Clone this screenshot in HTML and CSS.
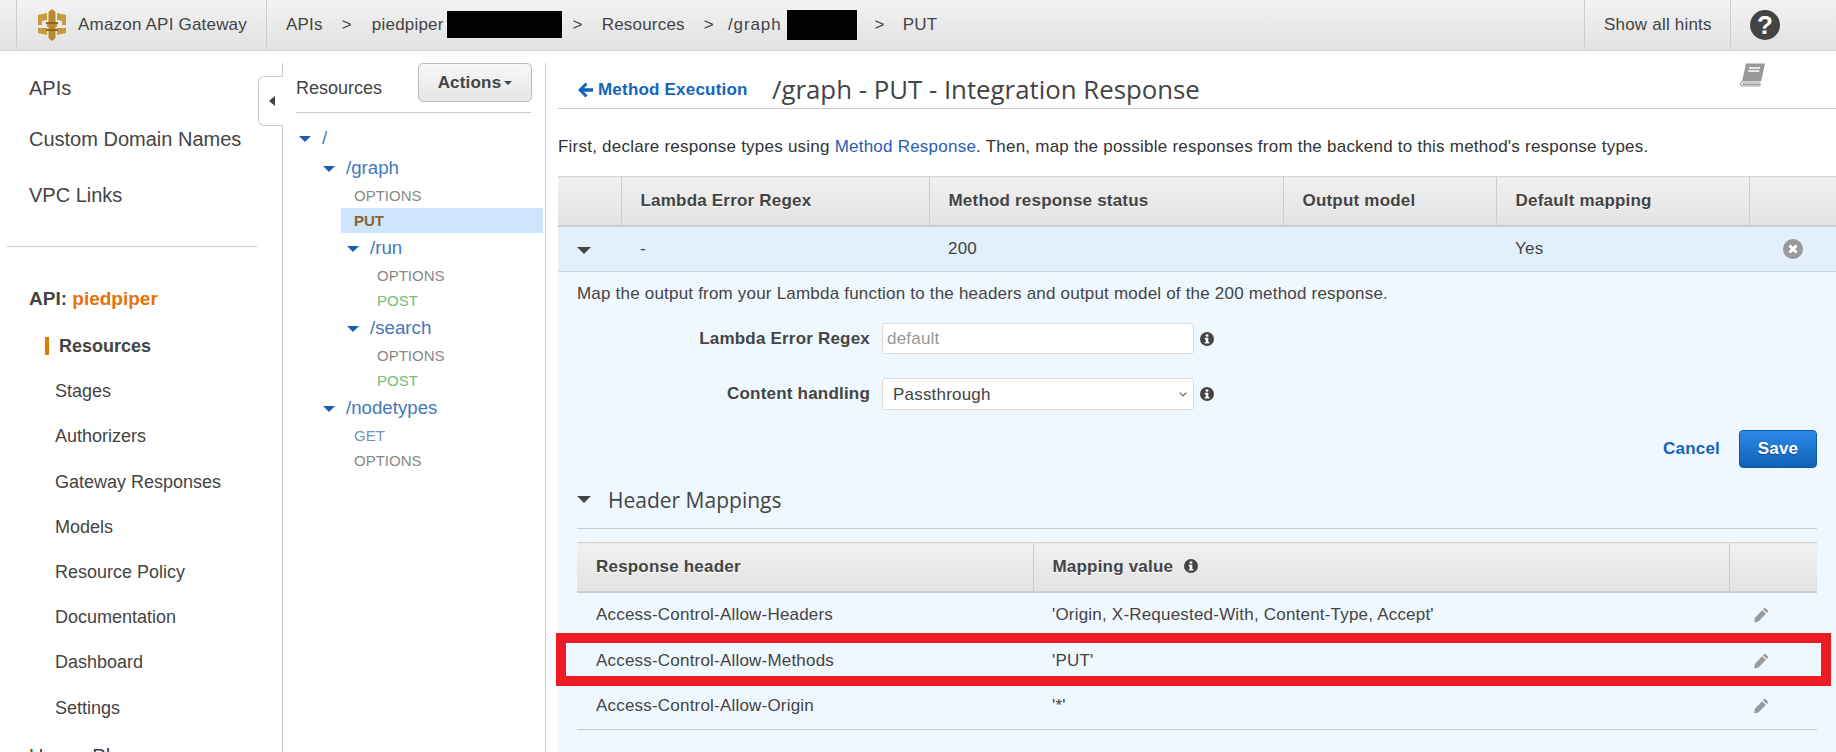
FILE: index.html
```html
<!DOCTYPE html>
<html lang="en">

<head>
    <meta charset="UTF-8">
    <title>Amazon API Gateway</title>
    <link rel="stylesheet" href="styles.css">
</head>

<body>
    <svg class="defs" width="0" height="0">
        <symbol id="i-info" viewBox="0 0 14 14">
            <circle cx="7" cy="7" r="7" fill="#444"/>
            <rect x="5.7" y="2.4" width="2.6" height="2.2" fill="#fff"/>
            <path d="M4.8 5.7h3.5v4.2h1v1.7H4.8V9.900h1V7.400h-1z" fill="#fff"/>
        </symbol>
        <symbol id="i-pencil" viewBox="0 0 16 16">
            <path d="M11.500 0.500l4 3.600-1.600 1.800-4-3.600zM9 3.200l4 3.600-7.600 7.800-4 1 .4-4.600z" fill="#9a9a9a"/>
        </symbol>
    </svg>

    <header class="topbar">
        <div class="brand">
            <svg class="logo" width="28" height="32" viewBox="0 0 28 32">
                <path d="M0 6l9-2v7l-5 1v4H0zM28 6l-9-2v7l5 1v4h4zM0 19h9v7l-9-2zM28 19h-9v7l9-2zM9 14h10v4H9z" fill="#c89b3c"/>
                <path d="M10.500 3l3.500-3 3.500 3v26l-3.500 3-3.500-3z" fill="#b98a2b"/>
                <path d="M8 13h12v2H8zM8 20h12v2H8z" fill="#8f6a1e"/>
            </svg>
            <span>Amazon API Gateway</span>
        </div>
        <nav class="crumbs">
            <span class="crumb-a">APIs</span>
            <span class="sep-a">&gt;</span>
            <span class="crumb-b">piedpiper</span>
            <span class="redact redact-a"></span>
            <span class="sep-b">&gt;</span>
            <span class="crumb-c">Resources</span>
            <span class="sep-c">&gt;</span>
            <span class="crumb-d">/graph</span>
            <span class="redact redact-b"></span>
            <span class="sep-d">&gt;</span>
            <span class="crumb-e">PUT</span>
        </nav>
        <div class="hints">Show all hints</div>
        <div class="help"><span class="help-icon">?</span></div>
    </header>

    <div class="page">
        <aside class="sidenav">
            <a class="top-link first">APIs</a>
            <a class="top-link second">Custom Domain Names</a>
            <a class="top-link third">VPC Links</a>
            <hr class="side-rule">
            <div class="api-name">API: <b>piedpiper</b></div>
            <ul class="side-list">
                <li class="active">Resources</li>
                <li>Stages</li>
                <li>Authorizers</li>
                <li>Gateway Responses</li>
                <li>Models</li>
                <li>Resource Policy</li>
                <li>Documentation</li>
                <li>Dashboard</li>
                <li>Settings</li>
            </ul>
            <div class="usage">Usage Plans</div>
            <div class="collapse-tab"><i></i></div>
        </aside>

        <section class="res-panel">
            <div class="res-head">
                <span>Resources</span>
                <button class="actions">Actions<i></i></button>
            </div>
            <ul class="tree">
                <li class="folder lv0"><i></i>/</li>
                <li class="folder lv1"><i></i>/graph</li>
                <li class="method m1 opt">OPTIONS</li>
                <li class="method m1 put">PUT</li>
                <li class="folder lv2"><i></i>/run</li>
                <li class="method m2 opt">OPTIONS</li>
                <li class="method m2 post">POST</li>
                <li class="folder lv2"><i></i>/search</li>
                <li class="method m2 opt">OPTIONS</li>
                <li class="method m2 post">POST</li>
                <li class="folder lv1"><i></i>/nodetypes</li>
                <li class="method m1 get">GET</li>
                <li class="method m1 opt">OPTIONS</li>
            </ul>
        </section>

        <main class="content">
            <div class="title-row">
                <a class="back">
                    <svg width="15" height="16" viewBox="0 0 15 16"><path d="M7.500 0.500l2 2-3.500 3.700h9v3.600H6l3.500 3.700-2 2L0 8z" fill="#1166bb"/></svg>
                    Method Execution
                </a>
                <h1>/graph - PUT - Integration Response</h1>
                <svg class="book" width="26" height="24" viewBox="0 0 26 24">
                    <path d="M6 0.500h19l-4 18H2z" fill="#999"/>
                    <path d="M2.500 18.500c-2.500 1-2.500 4 0 4.500h17l.8-1.500h-16c-1.500 0-1.500-1.500 0-1.500h16" fill="none" stroke="#999" stroke-width="1.200"/>
                    <path d="M9 5h11M8.300 8h11" stroke="#fff" stroke-width="1.500"/>
                </svg>
            </div>

            <p class="intro">First, declare response types using <a>Method Response</a>. Then, map the possible responses from the backend to this method's response types.</p>

            <table class="grid outer">
                <colgroup>
                    <col class="c0"><col class="c1"><col class="c2"><col class="c3"><col class="c4"><col class="c5">
                </colgroup>
                <thead>
                    <tr>
                        <th></th>
                        <th>Lambda Error Regex</th>
                        <th>Method response status</th>
                        <th>Output model</th>
                        <th>Default mapping</th>
                        <th></th>
                    </tr>
                </thead>
                <tbody>
                    <tr class="open-row">
                        <td><i class="caret"></i></td>
                        <td>-</td>
                        <td>200</td>
                        <td></td>
                        <td>Yes</td>
                        <td class="x-cell">
                            <svg width="20" height="20" viewBox="0 0 20 20">
                                <circle cx="10" cy="10" r="10" fill="#999"/>
                                <path d="M6.500 6.500l7 7M13.500 6.500l-7 7" stroke="#fff" stroke-width="3"/>
                            </svg>
                        </td>
                    </tr>
                </tbody>
            </table>

            <div class="detail">
                <p class="detail-text">Map the output from your Lambda function to the headers and output model of the 200 method response.</p>

                <div class="field field-a">
                    <label>Lambda Error Regex</label>
                    <input type="text" placeholder="default">
                    <svg class="info" width="14" height="14"><use href="#i-info"/></svg>
                </div>
                <div class="field field-b">
                    <label>Content handling</label>
                    <select><option>Passthrough</option></select>
                    <svg class="info" width="14" height="14"><use href="#i-info"/></svg>
                </div>

                <div class="form-actions">
                    <a class="cancel">Cancel</a>
                    <button class="save">Save</button>
                </div>

                <h2 class="section"><i class="caret"></i>Header Mappings</h2>

                <div class="map-wrap">
                    <table class="grid inner">
                        <colgroup>
                            <col class="d0"><col class="d1"><col class="d2">
                        </colgroup>
                        <thead>
                            <tr>
                                <th>Response header</th>
                                <th>Mapping value <svg class="info th-info" width="14" height="14"><use href="#i-info"/></svg></th>
                                <th></th>
                            </tr>
                        </thead>
                        <tbody>
                            <tr>
                                <td>Access-Control-Allow-Headers</td>
                                <td>'Origin, X-Requested-With, Content-Type, Accept'</td>
                                <td><svg width="16" height="16"><use href="#i-pencil"/></svg></td>
                            </tr>
                            <tr>
                                <td>Access-Control-Allow-Methods</td>
                                <td>'PUT'</td>
                                <td><svg width="16" height="16"><use href="#i-pencil"/></svg></td>
                            </tr>
                            <tr>
                                <td>Access-Control-Allow-Origin</td>
                                <td>'*'</td>
                                <td><svg width="16" height="16"><use href="#i-pencil"/></svg></td>
                            </tr>
                        </tbody>
                    </table>
                    <div class="highlight"></div>
                </div>
            </div>
        </main>
    </div>
</body>

</html>
```

FILE: styles.css
```css
*{
    margin:0;
    padding:0;
    box-sizing:border-box;
}
html,body{
    height:752px;
    overflow:hidden;
}
body{
    font-family:"Liberation Sans",Arial,sans-serif;
    font-size:17px;
    letter-spacing:.2px;
    color:#444;
    background:#fff;
}
ul{
    list-style:none;
}
i{
    font-style:normal;
}
.defs{
    position:absolute;
}

/* top bar */
.topbar{
    display:flex;
    height:51px;
    border-bottom:1px solid #d5d5d5;
    background:linear-gradient(#f3f3f3,#e1e1e1);
}
.brand{
    display:flex;
    align-items:center;
    width:251px;
    height:49px;
    margin-left:16px;
    padding-left:21px;
    border-left:1px solid #ccc;
    border-right:1px solid #ccc;
}
.logo{
    margin-right:12px;
}
.crumbs{
    display:flex;
    align-items:center;
    flex:1;
    height:49px;
    padding-left:19px;
}
.sep-a{ margin-left:19px; }
.crumb-b{ margin-left:20px; }
.redact{
    background:#000;
    height:27px;
}
.redact-a{
    width:115px;
    margin-left:3px;
}
.sep-b{ margin-left:11px; }
.crumb-c{ margin-left:19px; }
.sep-c{ margin-left:19px; }
.crumb-d{
    margin-left:14px;
    letter-spacing:.9px;
}
.redact-b{
    width:70px;
    height:30px;
    margin-left:5px;
}
.sep-d{ margin-left:18px; }
.crumb-e{ margin-left:18px; }
.hints{
    display:flex;
    align-items:center;
    width:147px;
    height:49px;
    padding-left:19px;
    border-left:1px solid #ccc;
    border-right:1px solid #ccc;
}
.help{
    display:flex;
    align-items:center;
    width:105px;
    padding-left:19px;
}
.help-icon{
    width:30px;
    height:30px;
    border-radius:50%;
    background:#444;
    color:#fff;
    font-weight:bold;
    font-size:26px;
    letter-spacing:0;
    line-height:30px;
    text-align:center;
}

/* layout */
.page{
    display:flex;
    height:701px;
}
.sidenav{
    position:relative;
    width:283px;
    flex:none;
    border-right:1px solid #ccc;
    margin-top:12px;
    padding-left:29px;
    font-size:20px;
    letter-spacing:0;
}
.top-link{
    display:block;
    line-height:24px;
}
.top-link.first{ margin-top:13px; }
.top-link.second{ margin-top:27px; }
.top-link.third{ margin-top:32px; }
.side-rule{
    border:0;
    border-top:1px solid #ccc;
    width:250px;
    margin:39px 0 0 -22px;
}
.api-name{
    margin-top:40px;
    line-height:24px;
    font-size:19px;
    font-weight:bold;
}
.api-name b{
    color:#e8710a;
}
.side-list{
    margin-top:13px;
    margin-left:26px;
    font-size:18px;
}
.side-list li{
    height:45.200px;
    line-height:45.200px;
}
.side-list li.active{
    position:relative;
    margin-left:4px;
    font-weight:bold;
}
.side-list li.active::before{
    content:"";
    position:absolute;
    left:-14px;
    top:13px;
    width:4px;
    height:18px;
    background:#e07b00;
}
.usage{
    margin-top:13px;
    line-height:24px;
}
.collapse-tab{
    position:absolute;
    left:258px;
    top:13px;
    width:25px;
    height:50px;
    background:#fff;
    border:1px solid #ccc;
    border-right:0;
    border-radius:6px 0 0 6px;
    display:flex;
    align-items:center;
    justify-content:center;
}
.collapse-tab i{
    border:5px solid transparent;
    border-right:6px solid #444;
    border-left:0;
    margin-left:2px;
}

/* resources column */
.res-panel{
    width:263px;
    flex:none;
    margin-top:12px;
    padding-left:13px;
    border-right:1px solid #ccc;
}
.res-head{
    display:flex;
    justify-content:space-between;
    align-items:flex-start;
    width:235px;
    height:50px;
    border-bottom:1px solid #ccc;
    font-size:18px;
    letter-spacing:0;
    line-height:51px;
}
.actions{
    width:114px;
    height:39px;
    margin-right:-1px;
    border:1px solid #bbb;
    border-radius:5px;
    background:linear-gradient(#f7f7f7,#e6e6e6);
    color:#444;
    font:bold 17px "Liberation Sans",Arial,sans-serif;
    letter-spacing:.2px;
}
.actions i{
    display:inline-block;
    vertical-align:middle;
    margin-left:3px;
    border:4px solid transparent;
    border-top:4px solid #444;
    border-bottom:0;
}
.tree{
    margin-top:10px;
    margin-left:-13px;
}
.folder{
    height:30px;
    line-height:30px;
    color:#4478bd;
    font-size:18.700px;
    letter-spacing:0;
}
.folder i{
    display:inline-block;
    vertical-align:middle;
    margin-right:11px;
    border:6px solid transparent;
    border-top:6px solid #1a5fb4;
    border-bottom:0;
}
.lv0{ padding-left:16px; }
.lv1{ padding-left:40px; }
.lv2{ padding-left:64px; }
.method{
    height:25px;
    line-height:25px;
    font-size:15px;
    letter-spacing:0;
}
.m1{ padding-left:71px; }
.m2{ padding-left:94px; }
.opt{ color:#888; }
.post{ color:#6cc07a; }
.get{ color:#6f93bd; }
.put{
    margin-left:58px;
    padding-left:13px;
    margin-right:2px;
    background:#cfe5fb;
    color:#86662e;
    font-weight:bold;
}

/* main */
.content{
    flex:1;
    min-width:0;
    padding-left:12px;
    display:flex;
    flex-direction:column;
}
.title-row{
    position:relative;
    display:flex;
    align-items:center;
    height:58px;
    border-bottom:1px solid #ccc;
    padding:19px 0 0 20px;
}
.back{
    display:flex;
    align-items:center;
    gap:5px;
    width:194px;
    margin-top:1px;
    color:#1166bb;
    font-weight:bold;
    font-size:17px;
}
h1{
    font-family:"Open Sans",sans-serif;
    font-weight:400;
    font-size:25.800px;
    letter-spacing:0;
    color:#444;
}
.book{
    position:absolute;
    left:1182px;
    top:12px;
}
.intro{
    margin-top:26px;
    height:41px;
    line-height:24px;
    letter-spacing:.23px;
    color:#333;
}
.intro a{
    color:#2a5db0;
}
.grid{
    width:100%;
    border-collapse:collapse;
    table-layout:fixed;
}
.grid th{
    height:49px;
    text-align:left;
    font-weight:bold;
    padding-left:19px;
    background:linear-gradient(#f1f1f1,#e2e2e2);
    border-left:1px solid #ccc;
    border-top:1px solid #d5d5d5;
    border-bottom:2px solid #ccc;
    text-shadow:0 1px 0 #fff;
}
.grid th:first-child{
    border-left:0;
}
.c0{ width:63px; }
.c1{ width:308px; }
.c2{ width:354px; }
.c3{ width:213px; }
.c4{ width:253px; }
.open-row td{
    height:46px;
    padding-left:19px;
    background:#e3f0fc;
    border-bottom:1px solid #ccd6e0;
}
.caret{
    display:inline-block;
    border:7px solid transparent;
    border-top:7px solid #444;
    border-bottom:0;
}
.x-cell svg{
    display:block;
    margin-left:15px;
}
.detail{
    flex:1;
    background:#f0f8ff;
    padding:0 19px;
}
.detail-text{
    line-height:24px;
    padding-top:10px;
}
.field{
    display:flex;
    align-items:center;
}
.field-a{ margin-top:17px; }
.field-b{ margin-top:24px; }
.field label{
    width:293px;
    text-align:right;
    font-weight:bold;
    margin-right:12px;
}
.field input,
.field select{
    width:312px;
    border:1px solid #dbdbdb;
    border-radius:3px;
    background:#fff;
    font:17px "Liberation Sans",Arial,sans-serif;
    letter-spacing:.2px;
    color:#444;
}
.field input{
    height:31px;
    padding:0 4px;
}
.field input::placeholder{
    color:#999;
}
.field select{
    height:32px;
    padding-left:10px;
    appearance:none;
    background:#fff url("data:image/svg+xml,%3Csvg xmlns='http://www.w3.org/2000/svg' width='8' height='5'%3E%3Cpath d='M.7.7L4 4 7.300.7' fill='none' stroke='%23666' stroke-width='1.200'/%3E%3C/svg%3E") no-repeat right 6px center;
}
.info{
    flex:none;
    margin-left:6px;
}
.form-actions{
    display:flex;
    justify-content:flex-end;
    align-items:center;
    gap:19px;
    margin-top:20px;
}
.cancel{
    color:#1166bb;
    font-weight:bold;
}
.save{
    width:78px;
    height:38px;
    border:1px solid #0b5cad;
    border-radius:4px;
    background:linear-gradient(#2d8ae8,#0f62b4);
    color:#fff;
    font:bold 17px "Liberation Sans",Arial,sans-serif;
    letter-spacing:.2px;
    text-shadow:0 1px 1px #0a4a8a;
}
.section{
    display:flex;
    align-items:center;
    gap:17px;
    height:61px;
    padding-top:3px;
    border-bottom:1px solid #ccc;
    font-family:"Open Sans",sans-serif;
    font-weight:400;
    font-size:21px;
    letter-spacing:0;
    color:#444;
}
.map-wrap{
    position:relative;
    margin-top:13px;
}
.inner{
    width:1240px;
}
.d0{ width:456px; }
.d1{ width:696px; }
.d2{ width:88px; }
.th-info{
    vertical-align:-1px;
    margin-left:6px;
}
.inner td{
    height:46px;
    padding-left:19px;
}
.inner td svg{
    display:block;
    margin-left:5px;
}
.inner tr:last-child td{
    border-bottom:1px solid #ccc;
}
.highlight{
    position:absolute;
    left:-21px;
    top:91px;
    width:1275px;
    height:53px;
    border:10px solid #ed1c24;
}
```
